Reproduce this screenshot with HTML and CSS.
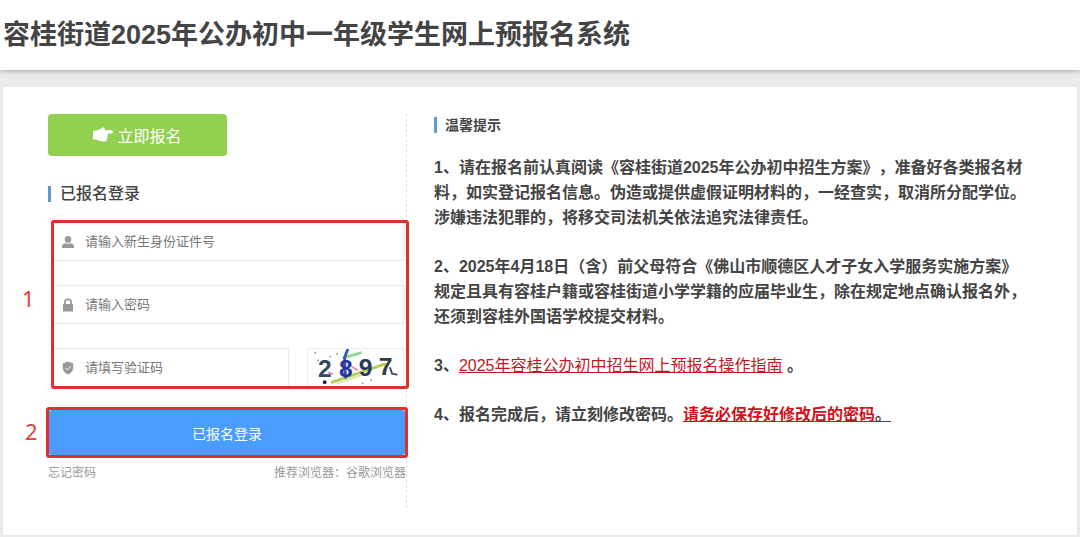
FILE: index.html
```html
<!DOCTYPE html>
<html lang="zh-CN">
<head>
    <meta charset="UTF-8">
    <meta name="viewport" content="width=device-width, initial-scale=1.0">
    <title>容桂街道2025年公办初中一年级学生网上预报名系统</title>
    <link rel="stylesheet" href="styles.css">
</head>
<body>
    <header class="header">
        <h1>容桂街道2025年公办初中一年级学生网上预报名系统</h1>
    </header>
    <main class="card">
        <section class="login">
            <button type="button" class="btn btn-signup">
                <svg class="hand" viewBox="0 0 20 16" aria-hidden="true">
                    <path d="M0 3.500h4.500v9H0z"/>
                    <path d="M4 3.200C7 3 8 1 10 .5c1.600-.3 2.300 1.200 1.500 2.700h6.700c2.200 0 2.200 3.400 0 3.400H14c1.500.5 1.300 2.400.1 2.800 1 .7.600 2.300-.6 2.600.6 1.200-.2 2.500-1.700 2.500H9c-1.500 0-2.500-1.300-5-1.300z"/>
                </svg>
                立即报名
            </button>
            <h2 class="title">已报名登录</h2>
            <form>
                <div class="fields marked">
                    <span class="mark-number">1</span>
                    <div class="field">
                        <label for="id-number" aria-label="新生身份证件号">
                            <svg viewBox="0 0 14 14"><path d="M7 1a3.300 3.300 0 0 1 3.300 3.300C10.300 6.400 9 8 7 8S3.700 6.400 3.700 4.300A3.300 3.300 0 0 1 7 1zM1 13v-2c0-1.500 2-2.500 4-2.700 1.200.9 2.800.9 4 0 2 .2 4 1.200 4 2.700v2z"/></svg>
                        </label>
                        <input type="text" id="id-number" placeholder="请输入新生身份证件号">
                    </div>
                    <div class="field">
                        <label for="password" aria-label="密码">
                            <svg viewBox="0 0 14 14"><path d="M3 6V4.500a4 4 0 0 1 8 0V6h1v7.500H2V6zm1.700 0h4.600V4.500a2.300 2.300 0 0 0-4.600 0z"/></svg>
                        </label>
                        <input type="password" id="password" placeholder="请输入密码">
                    </div>
                    <div class="field-row">
                        <div class="field">
                            <label for="code" aria-label="验证码">
                                <svg viewBox="0 0 14 14"><path d="M7 .5l5.300 2v4c0 3.300-2.200 5.700-5.300 7-3.100-1.300-5.300-3.700-5.300-7v-4z"/><path class="tick" d="M4.300 6.800l2 2 3.500-3.600"/></svg>
                            </label>
                            <input type="text" id="code" placeholder="请填写验证码">
                        </div>
                        <svg class="captcha" viewBox="0 0 98 39" role="img" aria-label="验证码图片">
                            <g fill="none" stroke-linecap="round">
                                <path stroke="#8fd894" stroke-width="3" d="M36 9l18-5"/>
                                <path stroke="#b3cf55" stroke-width="3" d="M24 35l23-8 32-11"/>
                                <path stroke="#d9e8a0" stroke-width="2" d="M30 36l26-9"/>
                                <path stroke="#3454b4" stroke-width="3" d="M40 1l-3 8 1 21"/>
                                <path stroke="#e58bc0" stroke-width="2" d="M20 25l4 1M45 19l5 3"/>
                                <path stroke="#444a60" stroke-width="2" d="M85 20l2 6 5 1"/>
                            </g>
                            <g class="captcha-text">
                                <text x="9" y="29" fill="#34495c">2</text>
                                <text x="31" y="30" fill="#26359a">8</text>
                                <text x="52" y="28" fill="#283b5c">9</text>
                                <text x="73" y="27" fill="#343b48">7</text>
                            </g>
                            <circle cx="16" cy="35" r="2" fill="#222"/>
                            <g fill="#a09a9a">
                                <circle cx="6" cy="4" r="1"/>
                                <circle cx="9" cy="12" r="1"/>
                                <circle cx="29" cy="5" r="1"/>
                                <circle cx="22" cy="8" r="1"/>
                                <circle cx="65" cy="33" r="1"/>
                                <circle cx="56" cy="36" r="1"/>
                            </g>
                        </svg>
                    </div>
                </div>
                <div class="submit marked">
                    <span class="mark-number">2</span>
                    <button type="submit" class="btn btn-login">已报名登录</button>
                </div>
            </form>
            <div class="login-foot">
                <a href="#">忘记密码</a>
                <span>推荐浏览器：谷歌浏览器</span>
            </div>
        </section>
        <section class="tips">
            <h3 class="title">温馨提示</h3>
            <p>1、请在报名前认真阅读《容桂街道2025年公办初中招生方案》，准备好各类报名材料，如实登记报名信息。伪造或提供虚假证明材料的，一经查实，取消所分配学位。涉嫌违法犯罪的，将移交司法机关依法追究法律责任。</p>
            <p>2、2025年4月18日（含）前父母符合《佛山市顺德区人才子女入学服务实施方案》规定且具有容桂户籍或容桂街道小学学籍的应届毕业生，除在规定地点确认报名外，还须到容桂外国语学校提交材料。</p>
            <p>3、<a href="#" class="guide">2025年容桂公办初中招生网上预报名操作指南</a> 。</p>
            <p>4、报名完成后，请立刻修改密码。<u><span class="warn">请务必保存好修改后的密码</span>。</u></p>
        </section>
    </main>
</body>
</html>
```

FILE: styles.css
```css
* {
    box-sizing: border-box;
}

body {
    font-family: "Liberation Sans", "Noto Sans CJK SC", sans-serif;
    background-color: #ebebeb;
    color: #444;
    margin: 0;
    text-spacing-trim: space-all;
}

h1, h2, h3, p {
    margin: 0;
}

.header {
    padding: 15px 3px;
    background-color: #fff;
    box-shadow: 0 1px 5px rgba(0, 0, 0, 0.3);
}

h1 {
    font-size: 27px;
    line-height: 40px;
}

.card {
    display: flex;
    gap: 27px;
    margin: 17px 3px 2px;
    padding: 27px 45px;
    background-color: #fff;
    border-radius: 2px;
}

.login {
    flex: 0 0 359px;
    padding-bottom: 27px;
    border-right: 1px dashed #e2e2e2;
}

.btn {
    border: none;
    border-radius: 4px;
    color: #fff;
    font-family: inherit;
    cursor: pointer;
}

.btn-signup {
    display: flex;
    align-items: center;
    justify-content: center;
    gap: 4px;
    width: 50%;
    height: 42px;
    background-color: #92d050;
    font-size: 16px;
}

.hand {
    width: 20px;
    height: 16px;
    fill: #fff;
}

.title {
    border-left: 3px solid #5b9bd0;
    padding-left: 9px;
    line-height: 16px;
}

.login .title {
    margin: 30px 0 20px;
    font-size: 16px;
    font-weight: 500;
}

/* red frames with step numbers */
.marked {
    position: relative;
}

.marked::after {
    content: "";
    position: absolute;
    inset: -2px -3px -2px 3px;
    border: 3px solid #e0302c;
    border-radius: 3px;
    pointer-events: none;
}

.submit.marked::after {
    inset: -3px -2px;
}

.mark-number {
    position: absolute;
    top: 46%;
    left: -26px;
    transform: translateY(-50%);
    color: #e0403a;
    font-family: "Noto Sans", sans-serif;
    font-size: 22px;
    line-height: 24px;
}

.submit .mark-number {
    left: -23px;
}

.fields {
    display: flex;
    flex-direction: column;
    gap: 24px;
    padding: 0 1px 0 4px;
}

.field {
    display: flex;
    flex: 1;
    align-items: center;
    gap: 10px;
    height: 39px;
    padding-left: 8px;
    border: 1px solid #eaeaea;
    border-radius: 2px;
}

.field label {
    display: flex;
}

.field svg {
    width: 14px;
    height: 14px;
    fill: #999;
}

.field .tick {
    fill: none;
    stroke: #fff;
}

.field input {
    flex: 1;
    min-width: 0;
    height: 37px;
    padding: 0;
    border: none;
    outline: none;
    background: none;
    font-family: inherit;
    font-size: 13px;
}

.field input::placeholder {
    color: #777;
}

.field-row {
    display: flex;
    gap: 18px;
}

.captcha {
    width: 98px;
    height: 39px;
    border: 1px solid #eee;
    border-radius: 2px;
}

.captcha-text {
    font-family: "Liberation Sans", sans-serif;
    font-size: 26px;
    font-weight: bold;
}

.submit {
    margin-top: 23px;
}

.btn-login {
    display: block;
    width: 100%;
    height: 45px;
    background-color: #4a9cff;
    font-size: 14px;
}

.login-foot {
    display: flex;
    justify-content: space-between;
    margin-top: 10px;
    color: #999;
    font-size: 12px;
    line-height: 16px;
}

.login-foot a {
    color: inherit;
    text-decoration: none;
}

.tips {
    flex: 1;
    font-size: 16px;
    font-weight: bold;
    line-height: 25px;
}

.tips .title {
    margin: 3px 0 22px;
    padding-left: 8px;
    font-size: 14px;
}

.tips p + p {
    margin-top: 24px;
}

.guide {
    color: #c4161c;
    font-weight: normal;
}

.warn {
    color: #d0121b;
    text-decoration: underline;
}
```
